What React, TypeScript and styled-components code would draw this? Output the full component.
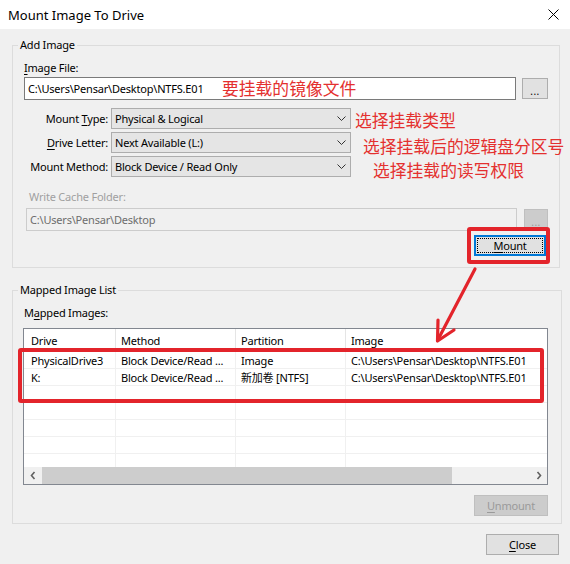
import React from "react";
import styled, { createGlobalStyle } from "styled-components";

const Global = createGlobalStyle`
  html, body { margin: 0; padding: 0; background: #f0f0f0; }
  body {
    font-family: "Noto Sans", "Noto Sans CJK SC", sans-serif;
    font-size: 11px;
    letter-spacing: -0.2px;
    color: #000;
  }
  * { box-sizing: border-box; }
`;

const RED = "#e3242b";

const Window = styled.div`
  position: relative;
  width: 570px;
  height: 564px;
  background: #f0f0f0;
  overflow: hidden;
  display: flex;
  flex-direction: column;
`;

const TitleBar = styled.div`
  height: 29px;
  flex-shrink: 0;
  background: #fff;
  display: flex;
  align-items: center;
  justify-content: space-between;
  padding: 0 11px 0 8px;
`;

const Title = styled.span`
  font-size: 13px;
  letter-spacing: 0;
  line-height: 16px;
`;

const Body = styled.div`
  display: flex;
  flex-direction: column;
  padding: 9px 0 0 12px;
`;

const Group = styled.fieldset<{ $w: number; $mt?: number }>`
  margin: ${(p) => p.$mt ?? 0}px 0 0 0;
  padding: 0;
  min-width: 0;
  width: ${(p) => p.$w}px;
  border: 1px solid #dcdcdc;
`;

const Legend = styled.legend`
  margin-left: 5px;
  padding: 0 2px;
  font-size: 11px;
  line-height: 14px;
`;

const GroupInner = styled.div<{ $pad: string }>`
  display: flex;
  flex-direction: column;
  padding: ${(p) => p.$pad};
`;

const Label = styled.div<{ $disabled?: boolean; $ml?: number; $mt?: number }>`
  line-height: 14px;
  height: 14px;
  white-space: nowrap;
  margin-left: ${(p) => p.$ml ?? 0}px;
  margin-top: ${(p) => p.$mt ?? 0}px;
  color: ${(p) => (p.$disabled ? "#a0a0a0" : "#000")};
`;

const Key = styled.span`
  text-decoration: underline;
  text-underline-offset: 2px;
  text-decoration-thickness: 1px;
`;

const InputRow = styled.div<{ $mt: number; $ml?: number; $gap: number }>`
  display: flex;
  align-items: center;
  gap: ${(p) => p.$gap}px;
  margin-top: ${(p) => p.$mt}px;
  margin-left: ${(p) => p.$ml ?? 0}px;
`;

const TextBox = styled.div<{ $disabled?: boolean }>`
  flex: 1;
  height: 23px;
  display: flex;
  align-items: center;
  padding-left: 3px;
  white-space: nowrap;
  background: ${(p) => (p.$disabled ? "#f0f0f0" : "#fff")};
  border: 1px solid ${(p) => (p.$disabled ? "#cccccc" : "#7a7a7a")};
  color: ${(p) => (p.$disabled ? "#6d6d6d" : "#000")};
`;

const Button = styled.div<{ $w: number; $disabled?: boolean; $focused?: boolean }>`
  position: relative;
  width: ${(p) => p.$w}px;
  height: 21px;
  flex-shrink: 0;
  display: flex;
  align-items: center;
  justify-content: center;
  line-height: 14px;
  background: ${(p) => (p.$disabled ? "#cccccc" : "#e1e1e1")};
  border: 1px solid
    ${(p) => (p.$focused ? "#0078d7" : p.$disabled ? "#bfbfbf" : "#adadad")};
  box-shadow: ${(p) => (p.$focused ? "inset 0 0 0 1px #0078d7" : "none")};
  color: ${(p) => (p.$disabled ? "#9a9a9a" : "#000")};
  &::after {
    content: "";
    display: ${(p) => (p.$focused ? "block" : "none")};
    position: absolute;
    inset: 2px;
    border: 1px dotted #000;
  }
`;

const Dots = styled.span`
  margin-top: 5px;
  font-size: 10px;
  letter-spacing: 0.5px;
`;

const ComboGrid = styled.div`
  display: grid;
  grid-template-columns: 84px 240px;
  column-gap: 3px;
  row-gap: 3px;
  margin-top: 8px;
  align-items: center;
`;

const ComboLabel = styled.div`
  text-align: right;
  line-height: 14px;
  white-space: nowrap;
`;

const Combo = styled.div`
  height: 21px;
  display: flex;
  align-items: center;
  justify-content: space-between;
  padding: 0 4px 0 3px;
  background: #e5e5e5;
  border: 1px solid #adadad;
  white-space: nowrap;
`;

const ButtonRow = styled.div<{ $mt: number; $mr: number }>`
  display: flex;
  justify-content: flex-end;
  margin-top: ${(p) => p.$mt}px;
  margin-right: ${(p) => p.$mr}px;
`;

/* ---------- List view ---------- */

const COLS = "92px 120px 110px 1fr";

const ListView = styled.div`
  margin-top: 8px;
  width: 525px;
  height: 157px;
  border: 1px solid #828790;
  background: #fff;
  display: flex;
  flex-direction: column;
  overflow: hidden;
`;

const HeaderRow = styled.div`
  display: grid;
  grid-template-columns: ${COLS};
  height: 23px;
  flex-shrink: 0;
`;

const HeaderCell = styled.div`
  line-height: 23px;
  padding-left: 5px;
  white-space: nowrap;
  overflow: hidden;
  border-right: 1px solid #e5e5e5;
  &:first-child { padding-left: 7px; }
  &:last-child { border-right: none; }
`;

const ListBody = styled.div`
  flex: 1;
  overflow: hidden;
`;

const Row = styled.div`
  display: grid;
  grid-template-columns: ${COLS};
  height: 17px;
  border-bottom: 1px solid #f0f0f0;
`;

const Cell = styled.div`
  line-height: 16px;
  padding: 1px 0 0 5px;
  white-space: nowrap;
  overflow: hidden;
  border-right: 1px solid #f0f0f0;
  &:first-child { padding-left: 7px; }
  &:last-child { border-right: none; }
`;

const HScroll = styled.div`
  height: 17px;
  flex-shrink: 0;
  display: flex;
  background: #f0f0f0;
`;

const ScrollArrow = styled.div`
  width: 17px;
  height: 17px;
  flex-shrink: 0;
  display: flex;
  align-items: center;
  justify-content: center;
`;

const ScrollTrack = styled.div`
  flex: 1;
  display: flex;
  padding-left: 1px;
`;

const Thumb = styled.div`
  width: 410px;
  height: 100%;
  background: #cdcdcd;
`;

/* ---------- overlays (annotations added on top of the screenshot) ---------- */

const Note = styled.div<{ $x: number; $y: number }>`
  position: absolute;
  left: ${(p) => p.$x}px;
  top: ${(p) => p.$y}px;
  font-family: "Noto Sans CJK SC", "Noto Sans", sans-serif;
  font-size: 16.8px;
  line-height: 20px;
  letter-spacing: 0;
  color: #e4302f;
  white-space: nowrap;
`;

const RedBox = styled.div<{ $x: number; $y: number; $w: number; $h: number }>`
  position: absolute;
  left: ${(p) => p.$x}px;
  top: ${(p) => p.$y}px;
  width: ${(p) => p.$w}px;
  height: ${(p) => p.$h}px;
  border: 4px solid ${RED};
  border-radius: 3px;
`;

const ArrowSvg = styled.svg`
  position: absolute;
  left: 425px;
  top: 260px;
  overflow: visible;
`;

const CloseX = () => (
  <svg width="11" height="11" viewBox="0 0 11 11">
    <path d="M0.5 0.5 L10.5 10.5 M10.5 0.5 L0.5 10.5" stroke="#000" strokeWidth="1" />
  </svg>
);

const Chevron = () => (
  <svg width="9" height="5" viewBox="0 0 9 5">
    <path d="M0.5 0.5 L4.5 4.5 L8.5 0.5" fill="none" stroke="#333" strokeWidth="1" />
  </svg>
);

const ScrollChevron = ({ dir }: { dir: "left" | "right" }) => (
  <svg width="6" height="9" viewBox="0 0 6 9">
    <path
      d={dir === "left" ? "M4.5 1 L1.5 4.5 L4.5 8" : "M1.5 1 L4.5 4.5 L1.5 8"}
      fill="none"
      stroke="#606060"
      strokeWidth="1.6"
    />
  </svg>
);

const PATH = "C:\\Users\\Pensar\\Desktop\\NTFS.E01";

const rows: string[][] = [
  ["PhysicalDrive3", "Block Device/Read ...", "Image", PATH],
  ["K:", "Block Device/Read ...", "新加卷 [NTFS]", PATH],
  ["", "", "", ""],
  ["", "", "", ""],
  ["", "", "", ""],
  ["", "", "", ""],
  ["", "", "", ""],
];

export default function App() {
  return (
    <>
      <Global />
      <Window>
        <TitleBar>
          <Title>Mount Image To Drive</Title>
          <CloseX />
        </TitleBar>

        <Body>
          <Group $w={548}>
            <Legend>Add Image</Legend>
            <GroupInner $pad="9px 11px 11px 11px">
              <Label>
                <Key>I</Key>mage File:
              </Label>
              <InputRow $mt={2} $gap={6}>
                <TextBox>{PATH}</TextBox>
                <Button $w={26}>
                  <Dots>...</Dots>
                </Button>
              </InputRow>

              <ComboGrid>
                <ComboLabel>
                  Mount <Key>T</Key>ype:
                </ComboLabel>
                <Combo>
                  Physical &amp; Logical
                  <Chevron />
                </Combo>
                <ComboLabel>
                  <Key>D</Key>rive Letter:
                </ComboLabel>
                <Combo>
                  Next Available (L:)
                  <Chevron />
                </Combo>
                <ComboLabel>Mount Method:</ComboLabel>
                <Combo>
                  Block Device / Read Only
                  <Chevron />
                </Combo>
              </ComboGrid>

              <Label $disabled $ml={5} $mt={13}>
                Write Cache Folder:
              </Label>
              <InputRow $mt={4} $ml={2} $gap={7}>
                <TextBox $disabled>C:\Users\Pensar\Desktop</TextBox>
                <Button $w={24} $disabled>
                  <Dots>...</Dots>
                </Button>
              </InputRow>

              <ButtonRow $mt={4} $mr={2}>
                <Button $w={72} $focused>
                  <span>
                    <Key>M</Key>ount
                  </span>
                </Button>
              </ButtonRow>
            </GroupInner>
          </Group>

          <Group $w={550} $mt={15}>
            <Legend>Mapped Image List</Legend>
            <GroupInner $pad="9px 13px 7px 10px">
              <Label $ml={1}>
                M<Key>a</Key>pped Images:
              </Label>
              <ListView>
                <HeaderRow>
                  <HeaderCell>Drive</HeaderCell>
                  <HeaderCell>Method</HeaderCell>
                  <HeaderCell>Partition</HeaderCell>
                  <HeaderCell>Image</HeaderCell>
                </HeaderRow>
                <ListBody>
                  {rows.map((r, i) => (
                    <Row key={i}>
                      {r.map((c, j) => (
                        <Cell key={j}>{c}</Cell>
                      ))}
                    </Row>
                  ))}
                </ListBody>
                <HScroll>
                  <ScrollArrow>
                    <ScrollChevron dir="left" />
                  </ScrollArrow>
                  <ScrollTrack>
                    <Thumb />
                  </ScrollTrack>
                  <ScrollArrow>
                    <ScrollChevron dir="right" />
                  </ScrollArrow>
                </HScroll>
              </ListView>
              <ButtonRow $mt={10} $mr={0}>
                <Button $w={74} $disabled>
                  <span>
                    <Key>U</Key>nmount
                  </span>
                </Button>
              </ButtonRow>
            </GroupInner>
          </Group>

          <ButtonRow $mt={10} $mr={11}>
            <Button $w={73}>
              <span>
                <Key>C</Key>lose
              </span>
            </Button>
          </ButtonRow>
        </Body>

        <Note $x={222} $y={78}>要挂载的镜像文件</Note>
        <Note $x={355} $y={110}>选择挂载类型</Note>
        <Note $x={363} $y={136}>选择挂载后的逻辑盘分区号</Note>
        <Note $x={373} $y={160}>选择挂载的读写权限</Note>

        <RedBox $x={467} $y={227} $w={83} $h={37} />
        <RedBox $x={18} $y={348} $w={526} $h={55} />

        <ArrowSvg width="50" height="90" viewBox="0 0 50 90">
          <g stroke={RED} strokeWidth="3.2" strokeLinecap="round" fill="none">
            <path d="M50 9 L12.5 80.5" />
            <path d="M13 60 L12.5 81 L29 70" strokeLinejoin="round" />
          </g>
        </ArrowSvg>
      </Window>
    </>
  );
}
